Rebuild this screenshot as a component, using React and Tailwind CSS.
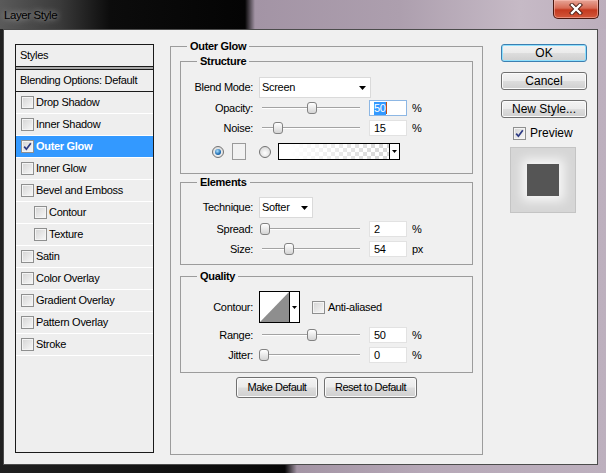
const STYLES = [
  { label: 'Drop Shadow' },
  { label: 'Inner Shadow' },
  { label: 'Outer Glow', active: true },
  { label: 'Inner Glow' },
  { label: 'Bevel and Emboss' },
  { label: 'Contour', indent: true },
  { label: 'Texture', indent: true },
  { label: 'Satin' },
  { label: 'Color Overlay' },
  { label: 'Gradient Overlay' },
  { label: 'Pattern Overlay' },
  { label: 'Stroke' },
];

function Check({ checked, className = '' }) {
  return (
    <span
      className={`relative inline-block w-[13px] h-[13px] shrink-0 border border-[#8e8f8f] bg-[linear-gradient(135deg,#d4d4d4,#f8f8f8)] shadow-[inset_0_0_0_1px_#f4f4f4] ${className}`}
    >
      {checked && (
        <svg viewBox="0 0 11 11" className="absolute inset-0 w-[11px] h-[11px]">
          <path d="M2.2 5.6 L4.4 8.2 L8.8 2.2" fill="none" stroke="#2c3a84" strokeWidth="1.7" />
        </svg>
      )}
    </span>
  );
}

function Arrow({ w = 7, h = 4 }) {
  return (
    <svg width={w} height={h} viewBox={`0 0 ${w} ${h}`} className="shrink-0">
      <path d={`M0 0H${w}L${w / 2} ${h}Z`} fill="#000" />
    </svg>
  );
}

function Label({ children }) {
  return <span className="w-[72px] shrink-0 text-right">{children}</span>;
}

function Slider({ pos }) {
  return (
    <div className="relative ml-[6px] w-[102px] h-[16px] shrink-0">
      <div className="absolute left-[3px] right-[1px] top-[7px] h-[2px] border-t border-[#a3a3a3] border-b border-b-white" />
      <div
        className="absolute top-[2px] w-[10px] h-[12px] rounded-[3px] border border-[#828282] bg-[linear-gradient(#ffffff,#d4d4d4)]"
        style={{ left: pos }}
      />
    </div>
  );
}

function NumBox({ value, focused }) {
  return (
    <div
      className={`ml-[8px] w-[38px] h-[16px] shrink-0 bg-white border flex items-center pl-[4px] ${
        focused ? 'border-[#8db7e4]' : 'border-[#e2e2e2]'
      }`}
    >
      {focused ? (
        <>
          <span className="bg-[#3399ff] text-white leading-[13px]">{value}</span>
          <span className="w-px h-[12px] bg-[#c05010]" />
        </>
      ) : (
        value
      )}
    </div>
  );
}

function SliderRow({ label, pos, value, unit, focused, className = '' }) {
  return (
    <div className={`h-[16px] flex items-center ${className}`}>
      <Label>{label}</Label>
      <Slider pos={pos} />
      <NumBox value={value} focused={focused} />
      <span className="ml-[5px]">{unit}</span>
    </div>
  );
}

function Group({ title, children, className = '' }) {
  return (
    <fieldset className={`border border-[#9c9c9c] ${className}`}>
      <legend className="ml-[16px] px-[3px] font-bold leading-[13px]">{title}</legend>
      {children}
    </fieldset>
  );
}

function Button({ children, className = '', primary }) {
  return (
    <button
      className={`flex items-center justify-center rounded-[3px] border bg-[linear-gradient(#f3f3f3_0%,#ebebeb_48%,#dddddd_52%,#cfcfcf_100%)] ${
        primary
          ? 'border-[#3c7fb1] shadow-[inset_0_0_0_1px_#8fe0fd]'
          : 'border-[#707070] shadow-[inset_0_0_0_1px_#fbfbfb]'
      } ${className}`}
    >
      {children}
    </button>
  );
}

function Radio({ on }) {
  return (
    <span className="w-[12px] h-[12px] shrink-0 rounded-full border border-[#727272] bg-[radial-gradient(circle_at_50%_60%,#ffffff,#cfcfcf)] flex items-center justify-center">
      {on && (
        <span className="w-[6px] h-[6px] rounded-full bg-[radial-gradient(circle_at_40%_35%,#aee2ff,#1f6db2_60%,#0a4282)]" />
      )}
    </span>
  );
}

export default function App() {
  return (
    <div className="w-[606px] h-[473px] overflow-hidden flex flex-col font-['Liberation_Sans',Arial,sans-serif] text-[11px] leading-[13px] tracking-[-0.3px] text-black bg-[linear-gradient(90deg,#202020_0%,#0b0b0b_40%,#060606_47%,#a394a4_49%,#b6a8b7_70%,#bdb0be_100%)]">
      {/* title bar */}
      <div className="h-[29px] shrink-0 flex items-start bg-[linear-gradient(90deg,#5a5a5a_0%,#3a3a3a_60px,#0c0c0c_110px,#040404_245px,#a394a5_255px,#ad9fae_400px,#c6bac6_520px,#bcaebc_100%)]">
        <span className="ml-[4px] mt-[9px] text-[11.5px] tracking-[-0.4px] [text-shadow:0_0_6px_rgba(255,255,255,0.7)]">
          Layer Style
        </span>
        <div className="ml-auto mr-[7px] w-[46px] h-[19px] rounded-b-[5px] border border-t-0 border-[#4a1810] bg-[linear-gradient(#e7a597_0%,#d76b55_45%,#c4391f_55%,#d2573b_100%)] shadow-[inset_0_0_0_1px_rgba(255,200,190,0.5)] flex items-center justify-center">
          <svg width="14" height="12" viewBox="0 0 14 12">
            <path d="M3 2 L11 10 M11 2 L3 10" stroke="#4a1c14" strokeWidth="4.2" strokeLinecap="square" />
            <path d="M3 2 L11 10 M11 2 L3 10" stroke="#fff" strokeWidth="2.4" strokeLinecap="square" />
          </svg>
        </div>
      </div>

      {/* dialog body */}
      <div className="ml-[3px] w-[595px] h-[436px] shrink-0 border border-[#4c4c4c] bg-[#f0f0f0] flex items-start pl-[11px]">
        {/* styles list */}
        <div className="mt-[14px] w-[139px] h-[409px] shrink-0 border border-[#1a1a1a] bg-[#eeeeee]">
          <div className="h-[21px] flex items-center pl-[4px]">Styles</div>
          <div className="h-[4px] border-y border-[#1a1a1a] bg-[#a8a8a8]" />
          <div className="h-[22px] flex items-center pl-[4px] border-b border-[#1a1a1a]">Blending Options: Default</div>
          {STYLES.map(({ label, active, indent }) => (
            <div
              key={label}
              className={`h-[22px] flex items-center border-b border-white ${indent ? 'pl-[18px]' : 'pl-[5px]'} ${
                active ? 'bg-[#3399ff] text-white font-bold' : ''
              }`}
            >
              <Check checked={active} />
              <span className="ml-[2px]">{label}</span>
            </div>
          ))}
        </div>

        {/* outer glow settings */}
        <Group title="Outer Glow" className="ml-[16px] mt-[10px] w-[313px] h-[415px] shrink-0">
          <div className="px-[9px]">
            <Group title="Structure" className="mt-[2px]">
              <div className="pt-[9px] pb-[13px]">
                <div className="h-[21px] flex items-center">
                  <Label>Blend Mode:</Label>
                  <div className="ml-[6px] w-[112px] h-[21px] bg-white border border-[#dadada] flex items-center justify-between pl-[2px] pr-[4px]">
                    <span>Screen</span>
                    <Arrow />
                  </div>
                </div>
                <SliderRow label="Opacity:" pos={48} value="50" unit="%" focused className="mt-[2px]" />
                <SliderRow label="Noise:" pos={14} value="15" unit="%" className="mt-[4px]" />
                <div className="mt-[7px] h-[17px] flex items-center pl-[31px]">
                  <Radio on />
                  <span className="ml-[8px] w-[14px] h-[17px] border border-[#9a9a9a] bg-[#f2f2f2]" />
                  <span className="ml-[13px]">
                    <Radio />
                  </span>
                  <div className="ml-[7px] w-[122px] h-[17px] border border-black flex">
                    <div className="relative flex-1 bg-[conic-gradient(#cfcfcf_25%,#ffffff_0_50%,#cfcfcf_0_75%,#ffffff_0)] bg-[length:8px_8px]">
                      <div className="absolute inset-0 bg-[linear-gradient(90deg,#ffffff_10%,rgba(255,255,255,0.2)_90%)]" />
                    </div>
                    <div className="w-[10px] border-l border-black bg-white flex items-center justify-center">
                      <Arrow w={5} h={3} />
                    </div>
                  </div>
                </div>
              </div>
            </Group>

            <Group title="Elements" className="mt-[2px]">
              <div className="pt-[8px] pb-[7px]">
                <div className="h-[21px] flex items-center">
                  <Label>Technique:</Label>
                  <div className="ml-[6px] w-[54px] h-[21px] bg-white border border-[#dadada] flex items-center justify-between pl-[2px] pr-[4px]">
                    <span>Softer</span>
                    <Arrow />
                  </div>
                </div>
                <SliderRow label="Spread:" pos={1} value="2" unit="%" className="mt-[3px]" />
                <SliderRow label="Size:" pos={25} value="54" unit="px" className="mt-[4px]" />
              </div>
            </Group>

            <Group title="Quality" className="mt-[5px]">
              <div className="pt-[8px] pb-[9px]">
                <div className="h-[32px] flex items-center">
                  <Label>Contour:</Label>
                  <div className="ml-[6px] w-[41px] h-[32px] border border-black bg-white flex">
                    <svg width="29" height="30" viewBox="0 0 29 30" className="shrink-0">
                      <path d="M0 30 L29 0 L29 30 Z" fill="#8e8e8e" />
                    </svg>
                    <div className="flex-1 border-l border-black flex items-center justify-center">
                      <Arrow w={5} h={3} />
                    </div>
                  </div>
                  <Check className="ml-[12px]" />
                  <span className="ml-[3px]">Anti-aliased</span>
                </div>
                <SliderRow label="Range:" pos={48} value="50" unit="%" className="mt-[4px]" />
                <SliderRow label="Jitter:" pos={0} value="0" unit="%" className="mt-[4px]" />
              </div>
            </Group>

            <div className="mt-[4px] flex justify-center gap-[6px] tracking-[-0.5px]">
              <Button className="w-[82px] h-[21px]">Make Default</Button>
              <Button className="w-[93px] h-[21px]">Reset to Default</Button>
            </div>
          </div>
        </Group>

        {/* action column */}
        <div className="ml-[18px] mt-[14px] flex flex-col text-[12px] tracking-normal">
          <Button primary className="w-[86px] h-[18px]">OK</Button>
          <Button className="mt-[10px] w-[86px] h-[18px]">Cancel</Button>
          <Button className="mt-[10px] w-[86px] h-[18px]">New Style...</Button>
          <div className="mt-[9px] h-[13px] flex items-center pl-[12px]">
            <Check checked />
            <span className="ml-[4px]">Preview</span>
          </div>
          <div className="mt-[7px] ml-[9px] w-[66px] h-[66px] border border-[#c4c4c4] bg-[#d6d6d6] flex items-center justify-center">
            <div className="w-[32px] h-[32px] bg-[#555555] shadow-[0_0_10px_5px_rgba(255,255,255,0.8)]" />
          </div>
        </div>
      </div>
    </div>
  );
}
